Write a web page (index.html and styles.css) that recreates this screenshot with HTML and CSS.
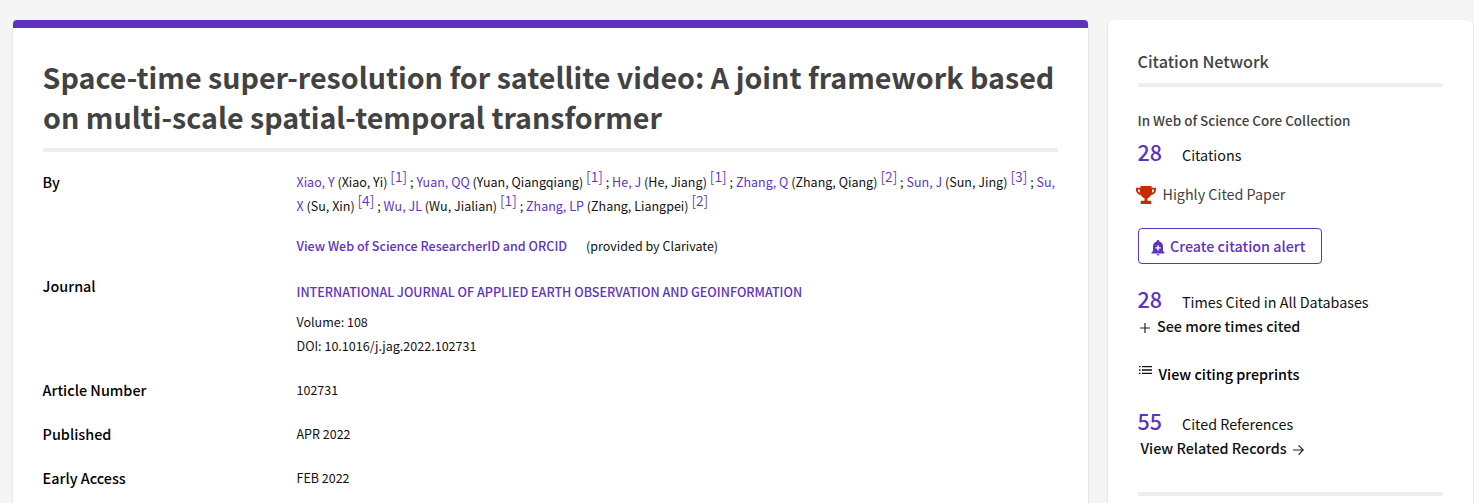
FILE: index.html
```
<!DOCTYPE html>
<html lang="en">
<head>
<meta charset="utf-8">
<title>Space-time super-resolution for satellite video</title>
<link rel="stylesheet" href="styles.css">
</head>
<body>
<div class="page">
  <main class="record">
    <h1 class="title">Space-time super-resolution for satellite video: A joint framework based on multi-scale spatial-temporal transformer</h1>
    <div class="details">
      <div class="label">By</div>
      <div class="value authors">
        <p class="names"><a>Xiao, Y</a> (Xiao, Yi) <sup>[1]</sup> ; <a>Yuan, QQ</a> (Yuan, Qiangqiang) <sup>[1]</sup> ; <a>He, J</a> (He, Jiang) <sup>[1]</sup> ; <a>Zhang, Q</a> (Zhang, Qiang) <sup>[2]</sup> ; <a>Sun, J</a> (Sun, Jing) <sup>[3]</sup> ; <a>Su, X</a> (Su, Xin) <sup>[4]</sup> ; <a>Wu, JL</a> (Wu, Jialian) <sup>[1]</sup> ; <a>Zhang, LP</a> (Zhang, Liangpei) <sup>[2]</sup></p>
        <p class="orcid"><a class="strong">View Web of Science ResearcherID and ORCID</a><span>(provided by Clarivate)</span></p>
      </div>
      <div class="label">Journal</div>
      <div class="value journal">
        <p><a class="strong">INTERNATIONAL JOURNAL OF APPLIED EARTH OBSERVATION AND GEOINFORMATION</a></p>
        <p class="volume">Volume: 108</p>
        <p class="doi">DOI: 10.1016/j.jag.2022.102731</p>
      </div>
      <div class="label">Article Number</div>
      <div class="value">102731</div>
      <div class="label">Published</div>
      <div class="value">APR 2022</div>
      <div class="label">Early Access</div>
      <div class="value">FEB 2022</div>
    </div>
  </main>
  <aside class="network">
    <h2 class="network-title">Citation Network</h2>
    <h3 class="subhead">In Web of Science Core Collection</h3>
    <div class="stat"><a class="count">28</a><span>Citations</span></div>
    <div class="highly">
      <svg class="trophy" width="20" height="18" viewBox="0 0 20 18"><path fill="#c92a00" fill-rule="evenodd" d="M4.500 0h11v1.800H20v2.200c0 2.700-2 4.600-4.900 5-.9 1.700-2.100 2.700-3.600 3.300v2.500h2.700c.7 0 1.100.5 1.100 1.200v2H4.700v-2c0-.7.4-1.200 1.100-1.200h2.700v-2.500C7 11.700 5.800 10.700 4.900 9 2 8.600 0 6.700 0 4V1.800h4.500zM1.900 3.500v.7c0 1.200.8 2.100 2.200 2.500-.2-1-.3-2.100-.3-3.200zM18.100 3.500h-1.900c0 1.100-.1 2.200-.3 3.200 1.400-.4 2.200-1.300 2.200-2.500z"/></svg>
      <span>Highly Cited Paper</span>
    </div>
    <button class="alert">
      <svg class="bell" width="14" height="16" viewBox="0 0 14 16"><path fill="#5e33bf" fill-rule="evenodd" d="M7 0a1.300 1.300 0 0 1 1.300 1.500C10.600 2.100 12 4 12 6.500v4.600l1.500 1.400v.9H.5v-.9L2 11.100V6.500C2 4 3.400 2.100 5.700 1.500A1.300 1.300 0 0 1 7 0zM6.300 5.200v2H4.300v1.400h2v2h1.400v-2h2V7.200h-2v-2zM5.400 14.200h3.200a1.600 1.400 0 0 1-3.200 0z"/></svg>
      <span>Create citation alert</span>
    </button>
    <div class="stat"><a class="count">28</a><span>Times Cited in All Databases</span></div>
    <div class="action more">
      <svg width="10" height="10" viewBox="0 0 10 10"><path d="M5 0v10M0 5h10" stroke="#222" stroke-width="1.200"/></svg>
      <span>See more times cited</span>
    </div>
    <div class="action preprints">
      <svg width="13" height="8" viewBox="0 0 13 8"><path d="M0 .7h1.500M0 4h1.500M0 7.300h1.500M3 .7h10M3 4h10M3 7.300h10" stroke="#111" stroke-width="1.300"/></svg>
      <span>View citing preprints</span>
    </div>
    <div class="stat"><a class="count">55</a><span>Cited References</span></div>
    <div class="action related">
      <span>View Related Records</span>
      <svg width="11" height="10" viewBox="0 0 11 10"><path d="M0 5h10M5.600.4L10.200 5 5.600 9.600" fill="none" stroke="#222" stroke-width="1.200"/></svg>
    </div>
    <hr class="rule">
  </aside>
</div>
</body>
</html>
```
FILE: styles.css
```
* { box-sizing: border-box; }
body {
  margin: 0;
  height: 503px;
  overflow: hidden;
  background: #f5f5f5;
  color: #111;
  font-family: "Noto Sans CJK SC", "Noto Sans", sans-serif;
}
h1, h2, h3, p { margin: 0; }
a { color: #5e33bf; }
.page {
  display: flex;
  gap: 20px;
  height: 503px;
  padding: 20px 1px 0 13px;
}
.record, .network {
  background: #fff;
  border-radius: 4px 4px 0 0;
  box-shadow: 0 1px 2px rgba(0, 0, 0, .2);
}
.network { border-radius: 6px 6px 0 0; }
.record {
  width: 1075px;
  padding: 29px 30px 0;
  border-top: 8px solid #5e33bf;
}
.title {
  height: 95px;
  border-bottom: 4px solid #eee;
  color: #424242;
  font-size: 28.650px;
  font-weight: 700;
  line-height: 40px;
  text-indent: -.4px;
}
.details {
  display: grid;
  grid-template-columns: 253.500px 1fr;
  row-gap: 20px;
  padding-top: 18px;
  line-height: 24px;
}
.label {
  color: #000;
  font-size: 14.380px;
  font-weight: 500;
  text-indent: -.4px;
}
.value { font-size: 12.500px; }
.authors { margin-bottom: -4px; }
.names { word-spacing: .08px; }
.strong { font-size: 12.560px; font-weight: 500; }
sup {
  position: relative;
  top: -5px;
  color: #5e33bf;
  font-size: 13.900px;
  font-weight: 350;
  line-height: 0;
  vertical-align: baseline;
}
.orcid {
  display: flex;
  gap: 19px;
  margin-top: 16px;
}
.journal { padding-top: 6px; }
.volume { margin-top: 6px; }
.doi { font-size: 12.550px; }
.network {
  width: 365px;
  padding: 29px 30px 0;
  font-size: 14.320px;
  line-height: 24px;
}
.network-title {
  height: 38px;
  border-bottom: 4px solid #eee;
  color: #424242;
  font-size: 16.200px;
  font-weight: 500;
  line-height: 25px;
  text-indent: -.5px;
}
.subhead {
  margin-top: 21px;
  color: #424242;
  font-size: 13.440px;
  font-weight: 500;
  text-indent: -.5px;
}
.stat {
  display: flex;
  align-items: baseline;
  height: 28px;
  margin: 6px 0 0 -.5px;
  line-height: 28px;
}
.count {
  width: 44.500px;
  font-size: 21.490px;
  font-weight: 500;
}
.highly {
  display: flex;
  align-items: center;
  gap: 6.500px;
  margin: 16px 0 0 -2px;
  color: #424242;
}
.trophy { margin-top: 2px; }
.alert {
  display: flex;
  align-items: center;
  gap: 5px;
  width: 184px;
  height: 36px;
  margin: 22px 0 21px;
  padding: 0 0 1px 12px;
  border: 1px solid #5e33bf;
  border-radius: 4px;
  background: #fff;
  color: #5e33bf;
  font: 500 14.340px/24px "Noto Sans CJK SC", "Noto Sans", sans-serif;
}
.bell { margin-top: 4px; }
.alert + .stat { margin-top: 0; }
.action {
  display: flex;
  align-items: center;
  color: #111;
  font-size: 14.350px;
  font-weight: 500;
}
.more { gap: 7px; margin: 1px 0 0 2px; }
.more svg { margin-top: 3px; }
.preprints { gap: 6.500px; margin: 24px 0 21px 1px; color: #000; }
.preprints svg { margin-bottom: 8px; }
.preprints + .stat { margin-top: 0; }
.related { gap: 6px; margin: 1px 0 0 2.500px; }
.related svg { margin-top: 4px; }
.rule {
  height: 4px;
  margin: 32px 0 0;
  border: 0;
  background: #eee;
}
```
